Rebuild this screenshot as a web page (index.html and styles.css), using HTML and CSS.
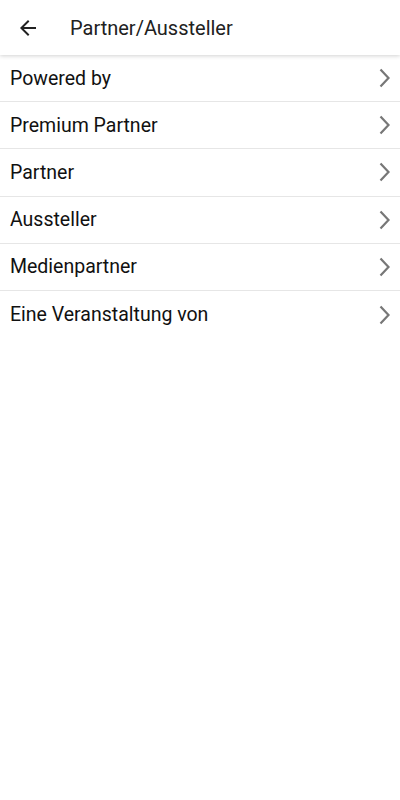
FILE: index.html
```html
<!DOCTYPE html>
<html>
<head>
<meta charset="utf-8">
<link rel="stylesheet" href="styles.css">
</head>
<body>
<header class="appbar">
  <svg class="back" width="24" height="24" viewBox="0 0 24 24"><path d="M20 11H7.83l5.59-5.59L12 4l-8 8 8 8 1.41-1.41L7.83 13H20v-2z" fill="#212121"/></svg>
  <h1 class="title">Partner/Aussteller</h1>
</header>
<ul class="list">
  <li class="row"><span>Powered by</span><svg class="chev" viewBox="0 0 14 20"><path d="M2.5 1.5 10.5 10l-8 8.5" fill="none" stroke="#777" stroke-width="2.2"/></svg></li>
  <li class="row"><span>Premium Partner</span><svg class="chev" viewBox="0 0 14 20"><path d="M2.5 1.5 10.5 10l-8 8.5" fill="none" stroke="#777" stroke-width="2.2"/></svg></li>
  <li class="row"><span>Partner</span><svg class="chev" viewBox="0 0 14 20"><path d="M2.5 1.5 10.5 10l-8 8.5" fill="none" stroke="#777" stroke-width="2.2"/></svg></li>
  <li class="row"><span>Aussteller</span><svg class="chev" viewBox="0 0 14 20"><path d="M2.5 1.5 10.5 10l-8 8.5" fill="none" stroke="#777" stroke-width="2.2"/></svg></li>
  <li class="row"><span>Medienpartner</span><svg class="chev" viewBox="0 0 14 20"><path d="M2.5 1.5 10.5 10l-8 8.5" fill="none" stroke="#777" stroke-width="2.2"/></svg></li>
  <li class="row last"><span>Eine Veranstaltung von</span><svg class="chev" viewBox="0 0 14 20"><path d="M2.5 1.5 10.5 10l-8 8.5" fill="none" stroke="#777" stroke-width="2.2"/></svg></li>
</ul>
</body>
</html>
```
FILE: styles.css
```css
html, body {
  margin: 0;
  padding: 0;
  background: #fff;
  font-family: Roboto, "Noto Sans", sans-serif;
  color: #1a1a1a;
}
.appbar {
  height: 55px;
  display: flex;
  align-items: center;
  padding-left: 16px;
  background: #fff;
  box-shadow: 0 1px 4px rgba(0,0,0,0.18);
  position: relative;
  z-index: 1;
}
.back {
  display: block;
  margin-right: 30px;
}
.title {
  margin: 0;
  font-size: 20px;
  font-weight: 400;
  color: #212121;
}
.list {
  list-style: none;
  margin: 0;
  padding: 0;
}
.row {
  box-sizing: border-box;
  height: 47.2px;
  display: flex;
  align-items: center;
  justify-content: space-between;
  padding: 0 8px 0 10px;
  font-size: 19.5px;
  color: #111;
  border-bottom: 1px solid #e6e6e6;
}
.row.last {
  border-bottom: none;
}
.chev {
  width: 14px;
  height: 20px;
  display: block;
}
```
